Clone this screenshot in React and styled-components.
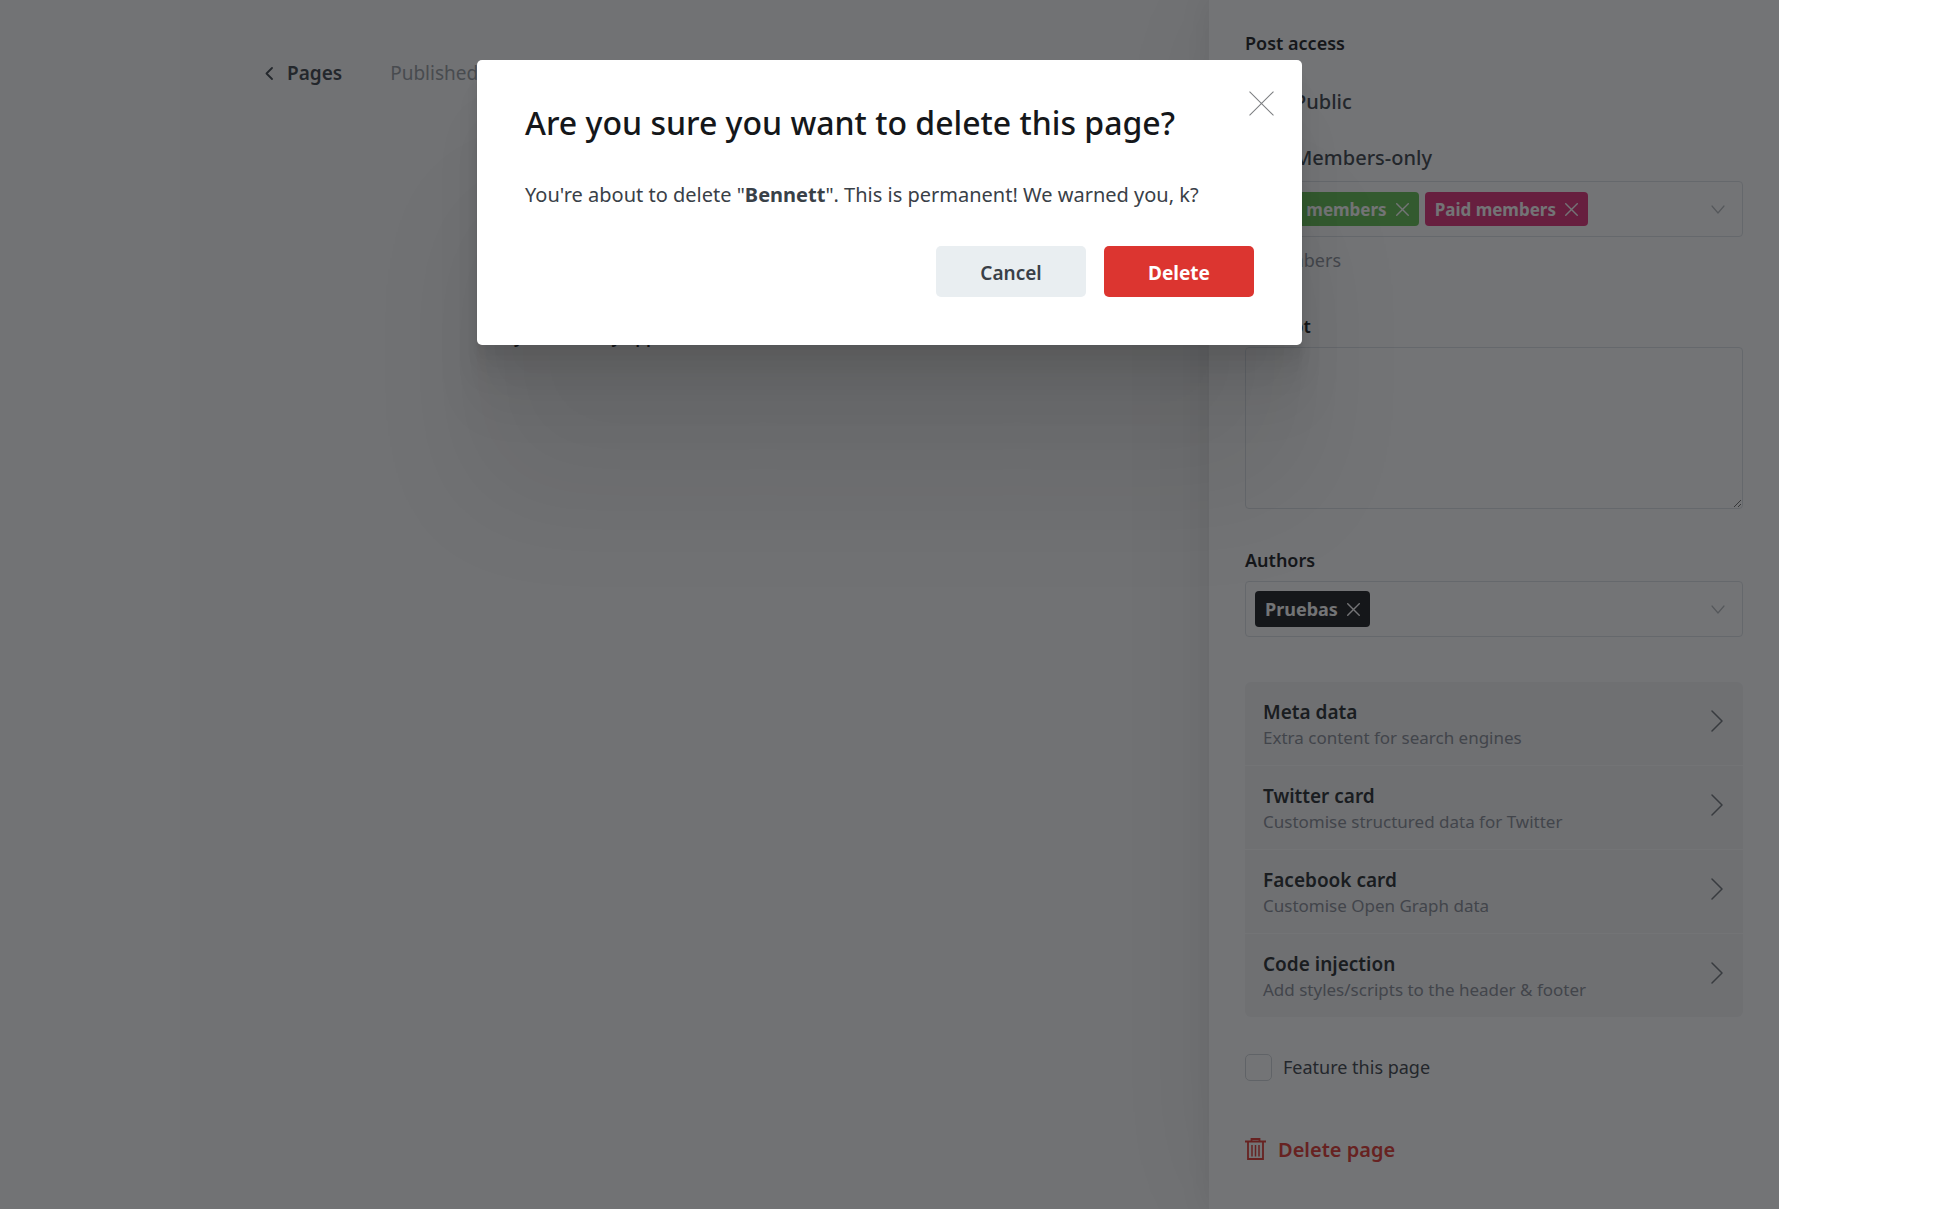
import React from "react";
import styled, { createGlobalStyle } from "styled-components";

const Global = createGlobalStyle`
  * { box-sizing: border-box; }
  body { margin: 0; background: #fff; }
  body, button, input, textarea { font-family: "Noto Sans", "Open Sans", sans-serif; }
  h1, h2, h3, p, fieldset { margin: 0; padding: 0; border: 0; font-weight: inherit; }
`;

const Viewport = styled.div`
  position: relative;
  display: grid;
  grid-template-columns: minmax(0, 180fr) minmax(0, 1029fr) 570px;
  min-height: 100vh;
  margin-right: 180px;
  overflow: hidden;
  color: #15171a;
`;

const NavSpace = styled.nav`
  background: #fdfdfd;
`;

const Editor = styled.main`
  background: #fafafa;
  padding: 58px 84px;
`;

const EditorBar = styled.header`
  display: flex;
  align-items: center;
  gap: 48px;
  font-size: 19px;
  line-height: 30px;
`;

const BackLink = styled.a`
  display: flex;
  align-items: center;
  gap: 12px;
  color: #394047;
  font-weight: 600;
  text-decoration: none;
`;

const Status = styled.span`
  color: #95999f;
`;

const Body = styled.p`
  margin: 234px 0 0 250px;
  font-size: 17px;
  font-weight: 600;
  line-height: 30px;
`;

const Panel = styled.aside`
  position: relative;
  padding: 28px 36px;
  background: #fff;
  box-shadow:
    0 0 30px rgba(0, 0, 0, 0.08),
    0 0 120px rgba(0, 0, 0, 0.07);
`;

const Label = styled.label`
  display: block;
  margin-bottom: 6px;
  font-size: 18px;
  font-weight: 600;
  line-height: 30px;
`;

const Access = styled.fieldset`
  display: grid;
  gap: 8px;
`;

const Legend = styled(Label).attrs({ as: "legend" })`
  padding: 0;
  margin-bottom: 19px;
`;

const Option = styled.label`
  display: flex;
  align-items: center;
  gap: 15px;
  height: 48px;
  font-size: 20px;
  font-weight: 500;
  color: #394047;

  input { width: 24px; height: 24px; margin: 0 0 0 10px; }
`;

const TokenField = styled.div`
  display: flex;
  align-items: center;
  gap: 6px;
  height: 56px;
  padding: 0 17px 0 9px;
  border: 1px solid #dde1e5;
  border-radius: 4px;
`;

const Token = styled.span`
  display: flex;
  align-items: center;
  gap: 9px;
  height: ${(p) => (p.$large ? 36 : 34)}px;
  padding: 0 10px;
  border-radius: 4px;
  background: ${(p) => p.$color};
  color: #fff;
  font-size: ${(p) => (p.$large ? 18 : 17)}px;
  font-weight: 700;
`;

const IconButton = styled.button`
  display: flex;
  padding: 0;
  border: 0;
  background: none;
  color: ${(p) => p.$color || "inherit"};
  margin-left: ${(p) => (p.$end ? "auto" : "0")};
`;

const Hint = styled.p`
  margin-top: 8px;
  color: #8b8f98;
  font-size: 18px;
  line-height: 30px;
`;

const Field = styled.div`
  margin-top: ${(p) => p.$gap}px;
`;

const Excerpt = styled.textarea`
  display: block;
  width: 100%;
  height: 162px;
  border: 1px solid #dde1e5;
  border-radius: 4px;
  background: #fff;
`;

const Menu = styled.div`
  margin-top: 45px;
  border-radius: 6px;
  overflow: hidden;
  background: #f4f5f6;
`;

const MenuItem = styled.button`
  display: flex;
  align-items: flex-start;
  justify-content: space-between;
  width: 100%;
  padding: 17px 20px 16px 18px;
  border: 0;
  background: none;
  color: #15171a;
  text-align: left;

  & + & { border-top: 1px solid #fff; }
  svg { margin-top: 11px; color: #6c7076; }
`;

const MenuTitle = styled.h3`
  font-size: 19px;
  font-weight: 600;
  line-height: 26px;
  color: #22262a;
`;

const MenuText = styled.p`
  font-size: 17px;
  line-height: 25px;
  margin-bottom: -1px;
  color: #868a93;
`;

const Check = styled.label`
  display: flex;
  align-items: center;
  gap: 11px;
  margin-top: 37px;
  font-size: 18px;
  line-height: 27px;
  color: #394047;

  input {
    appearance: none;
    width: 27px;
    height: 27px;
    margin: 0;
    border: 1px solid #d0d5d9;
    border-radius: 5px;
  }
`;

const DeleteLink = styled.button`
  display: flex;
  align-items: center;
  gap: 12px;
  margin-top: 54px;
  padding: 0;
  border: 0;
  background: none;
  color: #e0322c;
  font-size: 20px;
  font-weight: 600;
  line-height: 30px;
`;

const Overlay = styled.div`
  position: absolute;
  inset: 0;
  display: flex;
  justify-content: center;
  align-items: flex-start;
  padding-top: 60px;
  background: rgba(21, 23, 26, 0.6);
`;

const Modal = styled.section`
  position: relative;
  width: 825px;
  padding: 42px 48px 48px;
  border-radius: 5px;
  background: #fff;
  box-shadow:
    0 4px 3px rgba(0, 0, 0, 0.02),
    0 10px 8px rgba(0, 0, 0, 0.028),
    0 19px 15px rgba(0, 0, 0, 0.035),
    0 33px 27px rgba(0, 0, 0, 0.042),
    0 63px 50px rgba(0, 0, 0, 0.05),
    0 150px 120px rgba(0, 0, 0, 0.07);
`;

const ModalTitle = styled.h1`
  font-size: 32px;
  font-weight: 500;
  line-height: 42px;
`;

const ModalText = styled.p`
  margin-top: 36px;
  color: #394047;
  font-size: 20px;
  line-height: 30px;
`;

const Actions = styled.div`
  display: flex;
  justify-content: flex-end;
  gap: 18px;
  margin-top: 36px;
`;

const Button = styled.button`
  width: 150px;
  height: 51px;
  padding: 2px 0 0;
  border: 0;
  border-radius: 5px;
  background: ${(p) => (p.$danger ? "#dc3530" : "#e9eef1")};
  color: ${(p) => (p.$danger ? "#fff" : "#394047")};
  font-size: 19px;
  font-weight: ${(p) => (p.$danger ? 700 : 600)};
`;

const Close = styled.button`
  position: absolute;
  top: 31px;
  right: 28px;
  display: flex;
  padding: 0;
  border: 0;
  background: none;
  color: #7d7f82;
`;

const Cross = ({ size, width }) => (
  <svg width={size} height={size} viewBox="0 0 24 24" fill="none" stroke="currentColor" strokeWidth={width} aria-hidden="true">
    <path d="M.5.5l23 23M23.5.5l-23 23" />
  </svg>
);

const Chevron = ({ d, w, h, stroke = 1.5 }) => (
  <svg width={w} height={h} viewBox={`0 0 ${w} ${h}`} fill="none" stroke="currentColor" strokeWidth={stroke} strokeLinecap="round" strokeLinejoin="round" aria-hidden="true">
    <path d={d} />
  </svg>
);

const Trash = () => (
  <svg width="21" height="24" viewBox="0 0 21 24" fill="none" stroke="currentColor" aria-hidden="true">
    <path strokeWidth="1.8" d="M0 3.500h21M6.500 3V1h8v2M3 3.500v17.500h15V3.500" />
    <path strokeWidth="1.5" d="M7 7v11.500M10.500 7v11.500M14 7v11.500" />
  </svg>
);

const TokenItem = ({ children, ...rest }) => (
  <Token {...rest}>
    {children}
    <IconButton aria-label={`Remove ${children}`}><Cross size={13} width={2.6} /></IconButton>
  </Token>
);

const OpenButton = ({ label }) => (
  <IconButton $end $color="#b4b8bc" aria-label={label}>
    <Chevron d="M1 1l6 7 6-7" w={14} h={9} stroke={1.2} />
  </IconButton>
);

const MENU = [
  ["Meta data", "Extra content for search engines"],
  ["Twitter card", "Customise structured data for Twitter"],
  ["Facebook card", "Customise Open Graph data"],
  ["Code injection", "Add styles/scripts to the header & footer"],
];

export default function App() {
  return (
    <>
      <Global />
      <Viewport>
        <NavSpace />
        <Editor>
          <EditorBar>
            <BackLink href="#pages">
              <Chevron d="M8 1L2.500 6.500 8 12" w={11} h={13} stroke={1.8} />
              Pages
            </BackLink>
            <Status>Published</Status>
          </EditorBar>
          <Body>you want my app,</Body>
        </Editor>
        <Panel>
          <Access>
            <Legend>Post access</Legend>
            <Option><input type="radio" name="access" />Public</Option>
            <Option><input type="radio" name="access" defaultChecked />Members-only</Option>
          </Access>
          <TokenField>
            <TokenItem $color="#60be4e">Free members</TokenItem>
            <TokenItem $color="#e22b76">Paid members</TokenItem>
            <OpenButton label="Choose members" />
          </TokenField>
          <Hint>0 members</Hint>
          <Field $gap={36}>
            <Label htmlFor="excerpt">Excerpt</Label>
            <Excerpt id="excerpt" />
          </Field>
          <Field $gap={36}>
            <Label as="h3">Authors</Label>
            <TokenField>
              <TokenItem $color="#15171a" $large>Pruebas</TokenItem>
              <OpenButton label="Choose authors" />
            </TokenField>
          </Field>
          <Menu>
            {MENU.map(([title, text]) => (
              <MenuItem key={title}>
                <div>
                  <MenuTitle>{title}</MenuTitle>
                  <MenuText>{text}</MenuText>
                </div>
                <Chevron d="M1 1l10 10L1 21" w={12} h={22} />
              </MenuItem>
            ))}
          </Menu>
          <Check><input type="checkbox" />Feature this page</Check>
          <DeleteLink><Trash />Delete page</DeleteLink>
        </Panel>
        <Overlay>
          <Modal role="dialog" aria-labelledby="dialog-title">
            <ModalTitle id="dialog-title">Are you sure you want to delete this page?</ModalTitle>
            <ModalText>You're about to delete "<b>Bennett</b>". This is permanent! We warned you, k?</ModalText>
            <Actions>
              <Button>Cancel</Button>
              <Button $danger>Delete</Button>
            </Actions>
            <Close aria-label="Close"><Cross size={25} width={1} /></Close>
          </Modal>
        </Overlay>
      </Viewport>
    </>
  );
}
